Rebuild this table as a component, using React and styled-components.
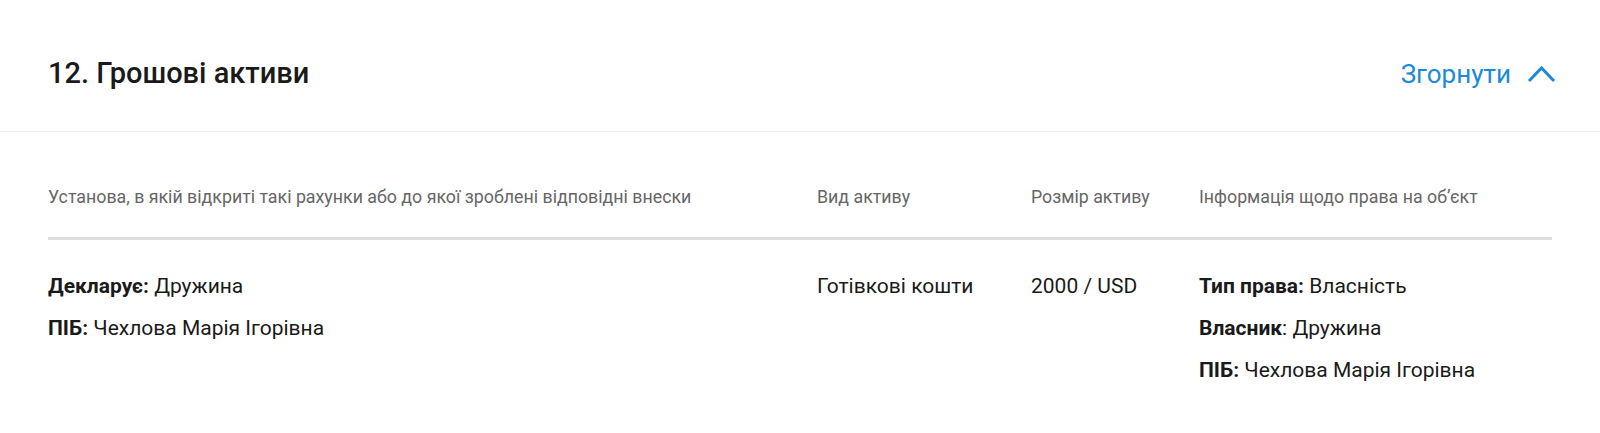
import React from 'react';
import styled, { createGlobalStyle } from 'styled-components';

const GlobalStyle = createGlobalStyle`
  body {
    margin: 0;
    background: #fff;
    font-family: Roboto, "Noto Sans", Arial, sans-serif;
    color: #1a1a1a;
  }
`

const Section = styled.section`
  width: 1600px;
  background: #fff;
`

const Header = styled.div`
  display: flex;
  align-items: center;
  justify-content: space-between;
  padding: 57px 44px 41px 48px;
  border-bottom: 1px solid #ededed;
`

const Title = styled.h2`
  margin: 0;
  font-size: 29px;
  line-height: 33px;
  font-weight: 500;
  color: #1a1a1a;
`

const Toggle = styled.button`
  display: flex;
  align-items: center;
  gap: 16px;
  padding: 0;
  border: none;
  background: none;
  cursor: pointer;
  font-family: inherit;
  font-size: 26px;
  line-height: 30px;
  color: #1b8ad8;
`

const Body = styled.div`
  padding: 0 48px 40px;
`

const Grid = styled.div`
  display: grid;
  grid-template-columns: 769px 214px 168px 1fr;
`

const HeadRow = styled(Grid)`
  padding: 53px 0 28px;
  border-bottom: 3px solid #dedede;
`

const HeadCell = styled.div`
  font-size: 17.8px;
  line-height: 24px;
  color: #666;
`

const DataRow = styled(Grid)`
  padding-top: 34px;
`

const Cell = styled.div`
  display: flex;
  flex-direction: column;
  gap: 18px;
`

const Line = styled.div`
  font-size: 21px;
  line-height: 24px;
  color: #1a1a1a;

  b {
    font-weight: 700;
  }
`

const Chevron = () => (
  <svg width="29" height="18" viewBox="0 0 29 18" fill="none">
    <polyline points="2,16 14.5,3 27,16" stroke="#1b8ad8" strokeWidth="3" />
  </svg>
)

const columns = [
  'Установа, в якій відкриті такі рахунки або до якої зроблені відповідні внески',
  'Вид активу',
  'Розмір активу',
  'Інформація щодо права на об\u02BCєкт',
]

export default function App() {
  return (
    <>
      <GlobalStyle />
      <Section>
        <Header>
          <Title>12. Грошові активи</Title>
          <Toggle>
            Згорнути
            <Chevron />
          </Toggle>
        </Header>
        <Body>
          <HeadRow>
            {columns.map((c) => (
              <HeadCell key={c}>{c}</HeadCell>
            ))}
          </HeadRow>
          <DataRow>
            <Cell>
              <Line><b>Декларує:</b> Дружина</Line>
              <Line><b>ПІБ:</b> Чехлова Марія Ігорівна</Line>
            </Cell>
            <Cell>
              <Line>Готівкові кошти</Line>
            </Cell>
            <Cell>
              <Line>2000 / USD</Line>
            </Cell>
            <Cell>
              <Line><b>Тип права:</b> Власність</Line>
              <Line><b>Власник</b>: Дружина</Line>
              <Line><b>ПІБ:</b> Чехлова Марія Ігорівна</Line>
            </Cell>
          </DataRow>
        </Body>
      </Section>
    </>
  )
}
